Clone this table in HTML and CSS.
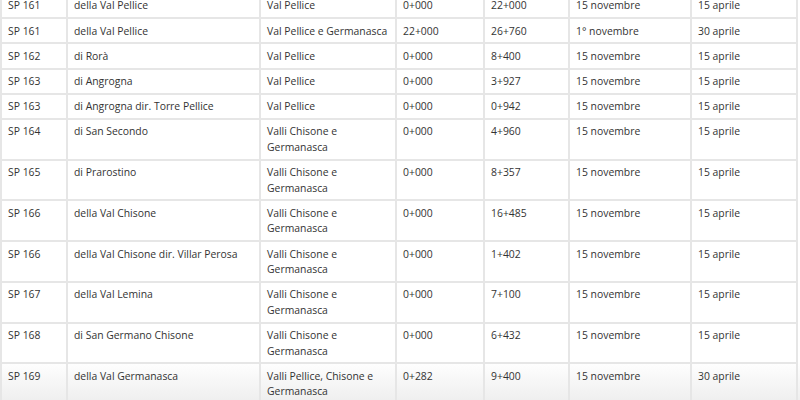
FILE: index.html
```html
<!DOCTYPE html>
<html lang="it">
<head>
<meta charset="utf-8">
<link rel="stylesheet" href="styles.css">
</head>
<body>
<div class="page">
<table class="roads">
<colgroup>
<col class="c-code"><col class="c-name"><col class="c-area"><col class="c-km1"><col class="c-km2"><col class="c-from"><col class="c-to">
</colgroup>
<tbody>
<tr><td>SP 161</td><td>della Val Pellice</td><td>Val Pellice</td><td>0+000</td><td>22+000</td><td>15 novembre</td><td>15 aprile</td></tr>
<tr><td>SP 161</td><td>della Val Pellice</td><td>Val Pellice e Germanasca</td><td>22+000</td><td>26+760</td><td>1° novembre</td><td>30 aprile</td></tr>
<tr><td>SP 162</td><td>di Rorà</td><td>Val Pellice</td><td>0+000</td><td>8+400</td><td>15 novembre</td><td>15 aprile</td></tr>
<tr><td>SP 163</td><td>di Angrogna</td><td>Val Pellice</td><td>0+000</td><td>3+927</td><td>15 novembre</td><td>15 aprile</td></tr>
<tr><td>SP 163</td><td>di Angrogna dir. Torre Pellice</td><td>Val Pellice</td><td>0+000</td><td>0+942</td><td>15 novembre</td><td>15 aprile</td></tr>
<tr><td>SP 164</td><td>di San Secondo</td><td>Valli Chisone e Germanasca</td><td>0+000</td><td>4+960</td><td>15 novembre</td><td>15 aprile</td></tr>
<tr><td>SP 165</td><td>di Prarostino</td><td>Valli Chisone e Germanasca</td><td>0+000</td><td>8+357</td><td>15 novembre</td><td>15 aprile</td></tr>
<tr><td>SP 166</td><td>della Val Chisone</td><td>Valli Chisone e Germanasca</td><td>0+000</td><td>16+485</td><td>15 novembre</td><td>15 aprile</td></tr>
<tr><td>SP 166</td><td>della Val Chisone dir. Villar Perosa</td><td>Valli Chisone e Germanasca</td><td>0+000</td><td>1+402</td><td>15 novembre</td><td>15 aprile</td></tr>
<tr><td>SP 167</td><td>della Val Lemina</td><td>Valli Chisone e Germanasca</td><td>0+000</td><td>7+100</td><td>15 novembre</td><td>15 aprile</td></tr>
<tr><td>SP 168</td><td>di San Germano Chisone</td><td>Valli Chisone e Germanasca</td><td>0+000</td><td>6+432</td><td>15 novembre</td><td>15 aprile</td></tr>
<tr><td>SP 169</td><td>della Val Germanasca</td><td>Valli Pellice, Chisone e Germanasca</td><td>0+282</td><td>9+400</td><td>15 novembre</td><td>30 aprile</td></tr>
</tbody>
</table>
</div>
</body>
</html>
```
FILE: styles.css
```css
html, body {
  margin: 0;
  padding: 0;
  background: #fff;
}
.page {
  width: 800px;
  height: 400px;
  overflow: hidden;
  background: linear-gradient(to bottom, #fff 0, #fff 362px, #f9f9f9 375px, #efefef 400px);
}
.roads {
  margin-top: -8px;
  width: 798px;
  table-layout: fixed;
  border-collapse: collapse;
  font-family: "Open Sans", "DejaVu Sans", sans-serif;
  font-size: 10.4px;
  line-height: 15.6px;
  color: #333;
}
.roads td {
  border: 2px solid #e6e6e6;
  padding: 4.4px 3px 3.2px 6px;
  vertical-align: top;
  text-align: left;
}
.c-code { width: 66px; }
.c-name { width: 193px; }
.c-area { width: 136px; }
.c-km1 { width: 88px; }
.c-km2 { width: 85px; }
.c-from { width: 122px; }
.c-to { width: 106px; }
```
